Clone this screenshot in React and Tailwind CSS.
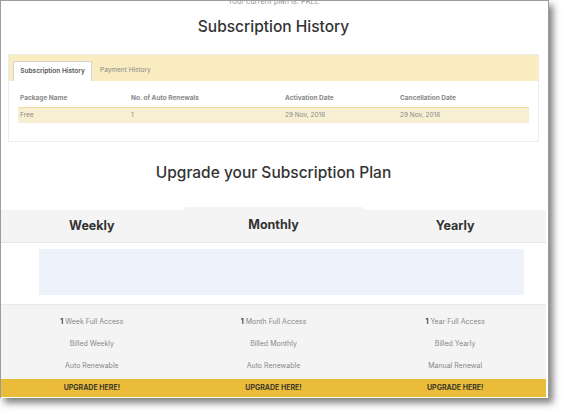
import React from 'react';

const plans = [
  { name: 'Weekly', unit: 'Week', billed: 'Billed Weekly', renewal: 'Auto Renewable' },
  { name: 'Monthly', unit: 'Month', billed: 'Billed Monthly', renewal: 'Auto Renewable', active: true },
  { name: 'Yearly', unit: 'Year', billed: 'Billed Yearly', renewal: 'Manual Renewal' },
];

const HistoryPanel = () => (
  <div className="mx-[7px] mt-[17px] h-[88px] border border-[#ececec] bg-white">
    <div className="flex h-[26px] items-end bg-[#f9ecc0] pl-[4px]">
      <div className="flex h-[20px] w-[79px] items-center justify-center border-t border-x border-[#d4d4d4] bg-white text-[6.5px] font-semibold text-[#555]">
        Subscription History
      </div>
      <div className="flex h-[20px] items-center px-[8px] text-[6.5px] text-[#888]">Payment History</div>
    </div>
    <div className="mx-[9px] mt-[13px]">
      <div className="flex h-[10px] items-center text-[6.5px] font-bold text-[#888]">
        <span className="w-[113px] pl-[2px]">Package Name</span>
        <span className="w-[154px]">No. of Auto Renewals</span>
        <span className="w-[115px]">Activation Date</span>
        <span>Cancellation Date</span>
      </div>
      <div className="mt-[3px] flex h-[16px] items-center border-t border-[#f3dc98] bg-[#f8efd3] text-[6.5px] text-[#888]">
        <span className="w-[113px] pl-[2px]">Free</span>
        <span className="w-[154px]">1</span>
        <span className="w-[115px]">29 Nov, 2016</span>
        <span>29 Nov, 2016</span>
      </div>
    </div>
  </div>
);

const Plans = () => (
  <div className="mt-[24px]">
    <div className="flex">
      {plans.map((p) => (
        <div
          key={p.name}
          className={
            p.active
              ? 'flex h-[35px] flex-1 items-start justify-center rounded-t-[3px] bg-[#f4f4f4] pt-[9px] text-[12.5px] font-bold text-[#333]'
              : 'mt-[3px] flex h-[32px] flex-1 items-center justify-center bg-[#f4f4f4] pt-[1px] text-[12.5px] font-bold text-[#333]'
          }
        >
          {p.name}
        </div>
      ))}
    </div>
    <div className="h-px bg-[#e6e6e6]" />
    <div className="pl-[38px] pr-[22px] pt-[6px]">
      <div className="h-[46px] bg-[#eef3fb]" />
    </div>
    <div className="mt-[9px] border-t border-[#e8e8e8] bg-[#f4f4f4]">
      <div className="flex pt-[12px] pb-[9px]">
        {plans.map((p) => (
          <div key={p.name} className="flex flex-1 flex-col items-center gap-[13px] text-[7px] text-[#888]">
            <span className="h-[9px] leading-[9px]">
              <b className="text-[#444]">1</b> {p.unit} Full Access
            </span>
            <span className="h-[9px] leading-[9px]">{p.billed}</span>
            <span className="h-[9px] leading-[9px]">{p.renewal}</span>
          </div>
        ))}
      </div>
    </div>
    <div className="flex h-[18px] bg-[#ebbb3a]">
      {plans.map((p) => (
        <div key={p.name} className="flex flex-1 items-center justify-center pt-px text-[7px] font-bold text-[#3a3a2a]">
          UPGRADE HERE!
        </div>
      ))}
    </div>
  </div>
);

export default function App() {
  return (
    <div className="h-[420px] w-[565px] overflow-hidden bg-white" style={{ fontFamily: 'Inter, "Noto Sans", sans-serif' }}>
      <div className="h-[398px] w-[549px] overflow-hidden border-x border-t border-[#9c9c9c] bg-white shadow-[4px_5px_7px_rgba(0,0,0,0.5)]">
        <div className="w-[545px]">
          <div className="mt-[-4px] flex h-[9px] items-center justify-center text-[7.5px] text-[#999]">Your current plan is: FREE</div>
          <h1 className="mt-[11px] text-center text-[15.5px] font-medium leading-[20px] text-[#333]">Subscription History</h1>
          <HistoryPanel />
          <h2 className="mt-[21px] text-center text-[15.5px] font-medium leading-[20px] text-[#333]">Upgrade your Subscription Plan</h2>
          <Plans />
        </div>
      </div>
    </div>
  );
}
